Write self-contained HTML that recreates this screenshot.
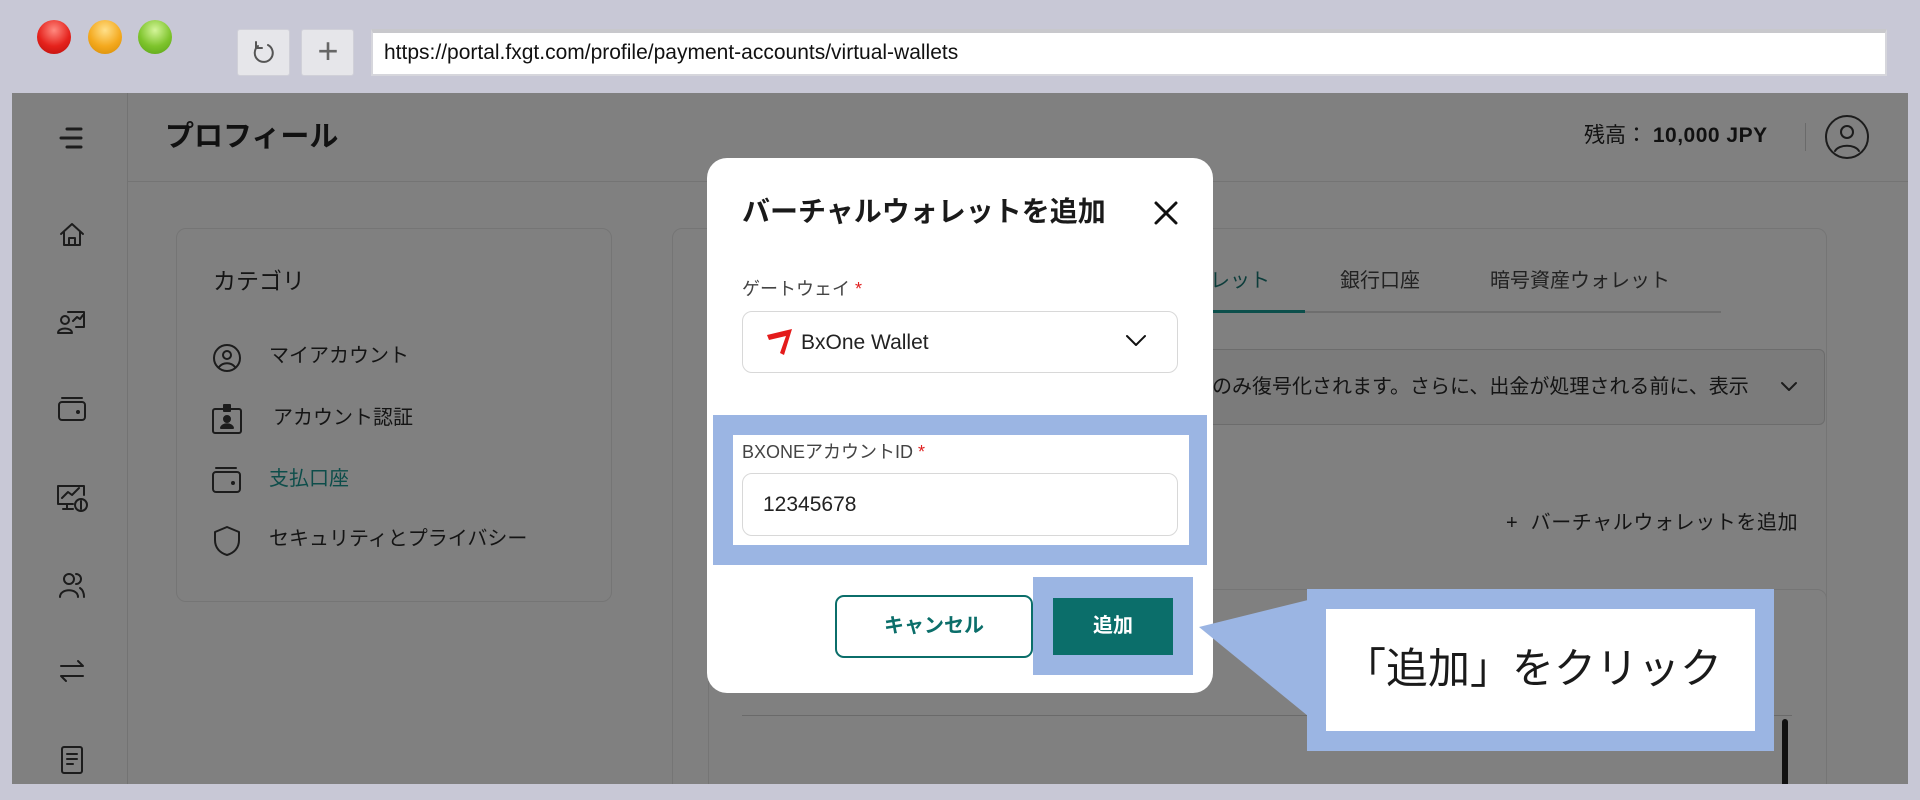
<!DOCTYPE html>
<html><head><meta charset="utf-8"><style>
*{margin:0;padding:0;box-sizing:border-box}
body{width:1920px;height:800px;background:#c8c8d6;position:relative;overflow:hidden;font-family:"Liberation Sans","Noto Sans CJK JP",sans-serif;color:#141414}
.a{position:absolute}
.t{white-space:nowrap;line-height:1}
.dot{position:absolute;width:34px;height:34px;border-radius:50%;top:20px}
svg.i{position:absolute;fill:none;stroke:#1c1c1c;stroke-width:2;stroke-linecap:round;stroke-linejoin:round}
</style></head><body>
<div class="dot" style="left:37px;background:radial-gradient(circle at 50% 30%,#ff8a80,#e5221c 55%,#b70e0b)"></div>
<div class="dot" style="left:88px;background:radial-gradient(circle at 50% 30%,#ffe08a,#f4a91e 55%,#d38a05)"></div>
<div class="dot" style="left:138px;background:radial-gradient(circle at 50% 30%,#d4f59a,#7ec42c 55%,#57a117)"></div>
<div class="a" style="left:237px;top:29px;width:53px;height:47px;background:#e6e6ea;border:1px solid #d0d0d8;border-radius:3px"></div>
<svg class="i" style="left:250px;top:40px" width="28" height="26" viewBox="0 0 28 26"><path d="M18 5A9 9 0 1 1 8 6" stroke="#555"/><path d="M6 2v6h6" stroke="#555"/></svg>
<div class="a" style="left:301px;top:29px;width:53px;height:47px;background:#e6e6ea;border:1px solid #d0d0d8;border-radius:3px"></div>
<div class="a t" style="left:313px;top:33px;font-size:36px;color:#666;width:30px;text-align:center">+</div>
<div class="a" style="left:371px;top:29px;width:1516px;height:47px;background:#fff;border:2px solid #d6d6dc;border-top:4px solid #c8c8cc"></div>
<div class="a t" style="left:384px;top:42px;font-size:21px;color:#111">https://portal.fxgt.com/profile/payment-accounts/virtual-wallets</div>

<div class="a" style="left:12px;top:93px;width:1896px;height:691px;background:#808080;overflow:hidden">
 <div class="a" style="left:115px;top:0;width:1px;height:691px;background:#737373"></div>
 <div class="a" style="left:116px;top:88px;width:1780px;height:1px;background:#747474"></div>
 <div class="a t" style="left:153px;top:30px;font-size:29px;font-weight:bold;color:#111">プロフィール</div>
 <div class="a t" style="left:1572px;top:32px;font-size:21px;color:#111">残高： <b style="letter-spacing:0.5px">10,000 JPY</b></div>
 <div class="a" style="left:1793px;top:30px;width:1px;height:28px;background:#6a6a6a"></div>
 <svg class="i" style="left:1812px;top:21px" width="46" height="46" viewBox="0 0 46 46"><circle cx="23" cy="23" r="21"/><circle cx="23" cy="18" r="6"/><path d="M11 37c4-7 20-7 24 0"/></svg>
 <svg class="i" style="left:45px;top:30px" width="30" height="30" viewBox="0 0 30 30" stroke-width="3"><path d="M10 6h14M4 15h20M10 24h14" stroke-width="3"/></svg>
 <svg class="i" style="left:45px;top:127px" width="30" height="30" viewBox="0 0 30 30"><path d="M4 14L15 4l11 10M7 12v13h16V12M12 25v-7h6v7"/></svg>
 <svg class="i" style="left:44px;top:214px" width="32" height="30" viewBox="0 0 32 30"><circle cx="9" cy="13" r="4"/><path d="M2 26c0-6 14-6 14 0zM12 5h16v15h-8M17 14l4-4 3 2 3-4"/></svg>
 <svg class="i" style="left:44px;top:302px" width="32" height="30" viewBox="0 0 32 30"><rect x="3" y="7" width="26" height="18" rx="3"/><path d="M6 3h20"/><circle cx="22" cy="17" r="1"/></svg>
 <svg class="i" style="left:43px;top:389px" width="34" height="32" viewBox="0 0 34 32"><path d="M18 22H3V4h26v9M12 22v5M8 27h10M7 16l6-6 4 3 7-7"/><circle cx="26" cy="23" r="6"/><path d="M26 19v8"/></svg>
 <svg class="i" style="left:45px;top:477px" width="30" height="30" viewBox="0 0 30 30"><circle cx="12" cy="9" r="5"/><path d="M3 27c0-9 18-9 18 0M19 4a5 5 0 0 1 0 10M23 18c3 2 4 5 4 9"/></svg>
 <svg class="i" style="left:45px;top:563px" width="30" height="30" viewBox="0 0 30 30"><path d="M4 10h22l-5-5M26 20H4l5 5"/></svg>
 <svg class="i" style="left:47px;top:651px" width="26" height="32" viewBox="0 0 26 32"><rect x="3" y="3" width="20" height="26" rx="2"/><path d="M8 10h10M8 15h10M8 20h6"/></svg>
 <div class="a" style="left:164px;top:135px;width:436px;height:374px;border:1px solid #757575;border-radius:10px"></div>
 <div class="a t" style="left:201px;top:177px;font-size:23px">カテゴリ</div>
 <svg class="i" style="left:200px;top:250px" width="30" height="30" viewBox="0 0 30 30"><circle cx="15" cy="15" r="13"/><circle cx="15" cy="12" r="4"/><path d="M7 24c4-5 12-5 16 0"/></svg>
 <div class="a t" style="left:257px;top:253px;font-size:20px">マイアカウント</div>
 <svg class="i" style="left:199px;top:310px" width="32" height="32" viewBox="0 0 32 32"><rect x="2" y="6" width="28" height="24" rx="2"/><rect x="13" y="2" width="6" height="6" fill="#1c1c1c"/><circle cx="16" cy="16" r="3" fill="#1c1c1c"/><path d="M10 25c1-5 11-5 12 0z" fill="#1c1c1c"/></svg>
 <div class="a t" style="left:261px;top:315px;font-size:20px">アカウント認証</div>
 <svg class="i" style="left:199px;top:372px" width="32" height="30" viewBox="0 0 32 30"><rect x="2" y="7" width="27" height="20" rx="3"/><path d="M5 3h20"/><circle cx="22" cy="18" r="1"/></svg>
 <div class="a t" style="left:257px;top:376px;font-size:20px;color:#0d4d4a">支払口座</div>
 <svg class="i" style="left:200px;top:432px" width="30" height="32" viewBox="0 0 30 32"><path d="M15 2l12 5v8c0 8-5 13-12 15C8 28 3 23 3 15V7z"/></svg>
 <div class="a t" style="left:257px;top:436px;font-size:20px">セキュリティとプライバシー</div>
 <div class="a" style="left:660px;top:135px;width:1155px;height:600px;border:1px solid #757575;border-radius:10px"></div>
 <div class="a t" style="left:1198px;top:178px;font-size:20px;color:#0d3d3b">レット</div>
 <div class="a" style="left:1190px;top:217px;width:103px;height:3px;background:#0c4f4b"></div>
 <div class="a" style="left:1293px;top:218px;width:416px;height:2px;background:#6e6e6e"></div>
 <div class="a t" style="left:1328px;top:178px;font-size:20px;color:#222">銀行口座</div>
 <div class="a t" style="left:1478px;top:178px;font-size:20px;color:#222">暗号資産ウォレット</div>
 <div class="a" style="left:1160px;top:256px;width:653px;height:76px;border:1px solid #6c6c6c;border-radius:6px;background:#7b7b7b"></div>
 <div class="a t" style="left:1200px;top:284px;font-size:20px">のみ復号化されます。さらに、出金が処理される前に、表示</div>
 <svg class="i" style="left:1767px;top:286px" width="20" height="16" viewBox="0 0 20 16"><path d="M3 4l7 7 7-7"/></svg>
 <div class="a t" style="left:1494px;top:420px;font-size:20px;letter-spacing:0.6px">+&nbsp;&nbsp;バーチャルウォレットを追加</div>
 <div class="a" style="left:696px;top:496px;width:1119px;height:220px;border:1px solid #757575;border-radius:10px"></div>
 <div class="a" style="left:730px;top:622px;width:1050px;height:1px;background:#6a6a6a"></div>
 <div class="a" style="left:1770px;top:626px;width:6px;height:70px;background:#111;border-radius:3px"></div>
</div>

<div class="a" style="left:707px;top:158px;width:506px;height:535px;background:#fff;border-radius:20px"></div>
<div class="a t" style="left:742px;top:198px;font-size:28px;font-weight:bold;color:#1a1a1a">バーチャルウォレットを追加</div>
<svg class="i" style="left:1153px;top:200px" width="26" height="26" viewBox="0 0 26 26"><path d="M3 3l20 20M23 3L3 23" stroke="#111" stroke-width="3"/></svg>
<div class="a t" style="left:742px;top:280px;font-size:18px;color:#444">ゲートウェイ <span style="color:#e02020">*</span></div>
<div class="a" style="left:742px;top:311px;width:436px;height:62px;border:1px solid #d8d8d8;border-radius:10px"></div>
<svg class="a" style="left:763px;top:325px" width="32" height="32" viewBox="0 0 32 32"><path d="M4 10L29 4 21 30 17 28 23 11 6 15z" fill="#e41b1b"/></svg>
<div class="a t" style="left:801px;top:332px;font-size:21px;color:#222">BxOne Wallet</div>
<svg class="i" style="left:1124px;top:333px" width="24" height="16" viewBox="0 0 24 16"><path d="M3 3l9 9 9-9" stroke="#111"/></svg>
<div class="a" style="left:713px;top:415px;width:494px;height:150px;background:#9bb5e3"></div>
<div class="a" style="left:733px;top:435px;width:456px;height:110px;background:#fff"></div>
<div class="a t" style="left:742px;top:443px;font-size:18px;color:#444">BXONEアカウントID <span style="color:#e02020">*</span></div>
<div class="a" style="left:742px;top:473px;width:436px;height:63px;border:1px solid #d8d8d8;border-radius:10px;background:#fff"></div>
<div class="a t" style="left:763px;top:494px;font-size:21px;color:#222">12345678</div>
<div class="a" style="left:835px;top:595px;width:198px;height:63px;border:2px solid #0b6e6a;border-radius:9px;background:#fff"></div>
<div class="a t" style="left:835px;top:616px;width:198px;text-align:center;font-size:20px;font-weight:bold;color:#0b6e6a">キャンセル</div>
<div class="a" style="left:1033px;top:577px;width:160px;height:98px;background:#9bb5e3"></div>
<div class="a" style="left:1053px;top:598px;width:120px;height:57px;background:#0b6e6a"></div>
<div class="a t" style="left:1053px;top:616px;width:120px;text-align:center;font-size:20px;font-weight:bold;color:#fff">追加</div>
<svg class="a" style="left:1195px;top:590px" width="120" height="140" viewBox="0 0 120 140"><path d="M4 37L113 10V126z" fill="#9bb5e3"/></svg>
<div class="a" style="left:1307px;top:589px;width:467px;height:162px;background:#9bb5e3"></div>
<div class="a" style="left:1326px;top:609px;width:429px;height:122px;background:#fff"></div>
<div class="a t" style="left:1344px;top:648px;font-size:42px;color:#1a1a1a">「追加」をクリック</div>
</body></html>
